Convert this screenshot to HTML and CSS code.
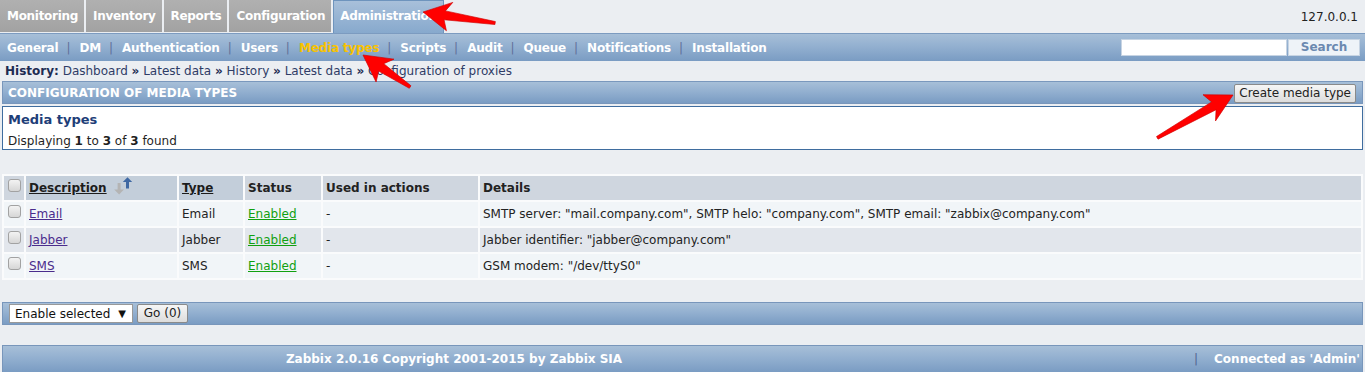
FILE: index.html
```html
<!DOCTYPE html>
<html lang="en">
<head>
  <meta charset="UTF-8" />
  <title>Configuration of media types</title>
  <link rel="stylesheet" href="styles.css">
</head>
<body>
  <div class="top">
    <ul class="tabs">
      <li>Monitoring</li>
      <li>Inventory</li>
      <li>Reports</li>
      <li>Configuration</li>
      <li class="active">Administration</li>
    </ul>
    <span class="host">127.0.0.1</span>
  </div>

  <div class="subbar">
    <nav class="submenu"><a>General</a><span class="sep">|</span><a>DM</a><span class="sep">|</span><a>Authentication</a><span class="sep">|</span><a>Users</a><span class="sep">|</span><a class="current">Media types</a><span class="sep">|</span><a>Scripts</a><span class="sep">|</span><a>Audit</a><span class="sep">|</span><a>Queue</a><span class="sep">|</span><a>Notifications</a><span class="sep">|</span><a>Installation</a></nav>
    <div class="search">
      <input type="text" class="search-input">
      <button class="search-btn">Search</button>
    </div>
  </div>

  <div class="page">
    <div class="history">
      <b>History:</b> <a>Dashboard</a> <b>&raquo;</b> <a>Latest data</a> <b>&raquo;</b> <a>History</a> <b>&raquo;</b> <a>Latest data</a> <b>&raquo;</b> <a>Configuration of proxies</a>
    </div>

    <div class="titlebar">
      <span class="title">CONFIGURATION OF MEDIA TYPES</span>
      <button class="btn">Create media type</button>
    </div>

    <div class="infobox">
      <h2>Media types</h2>
      <p>Displaying <b>1</b> to <b>3</b> of <b>3</b> found</p>
    </div>

    <table class="list">
      <thead>
        <tr>
          <th class="col-check"><input type="checkbox" class="cb"></th>
          <th class="col-desc sortable"><a class="sort-link">Description</a>
            <svg class="sort-icon" width="20" height="18" viewBox="0 0 20 18">
              <path d="M4.6 6h3v6.5H11L6.1 17.5 1.2 12.5h3.4z" fill="#b4b4b4"/>
              <path d="M13 11.5V5H9.8L14.5 0.2 19.2 5H16v6.5z" fill="#3e68a3"/>
            </svg>
          </th>
          <th class="col-type sortable"><a class="sort-link">Type</a></th>
          <th class="col-status">Status</th>
          <th class="col-used">Used in actions</th>
          <th>Details</th>
        </tr>
      </thead>
      <tbody>
        <tr class="odd">
          <td><input type="checkbox" class="cb"></td>
          <td><a class="link">Email</a></td>
          <td>Email</td>
          <td><a class="enabled">Enabled</a></td>
          <td>-</td>
          <td>SMTP server: "mail.company.com", SMTP helo: "company.com", SMTP email: "zabbix@company.com"</td>
        </tr>
        <tr class="even">
          <td><input type="checkbox" class="cb"></td>
          <td><a class="link">Jabber</a></td>
          <td>Jabber</td>
          <td><a class="enabled">Enabled</a></td>
          <td>-</td>
          <td>Jabber identifier: "jabber@company.com"</td>
        </tr>
        <tr class="odd">
          <td><input type="checkbox" class="cb"></td>
          <td><a class="link">SMS</a></td>
          <td>SMS</td>
          <td><a class="enabled">Enabled</a></td>
          <td>-</td>
          <td>GSM modem: "/dev/ttyS0"</td>
        </tr>
      </tbody>
    </table>

    <div class="actionbar">
      <div class="select"><span>Enable selected</span><span class="caret">&#9660;</span></div>
      <button class="btn">Go (0)</button>
    </div>

    <div class="footer">
      <span class="copyright">Zabbix 2.0.16 Copyright 2001-2015 by Zabbix SIA</span>
      <span class="fsep">|</span>
      <span class="user">Connected as 'Admin'</span>
    </div>
  </div>

  <svg class="arrows" width="1365" height="372" viewBox="0 0 1365 372">
    <path transform="translate(423 12) rotate(8.7)" d="M0 0L28-14L22-4.5L73-1.5L73 1.5L22 4.5L26 15Z"/>
    <path transform="translate(363 55) rotate(34.2)" d="M0 0L28-14L22-4.5L57-1.5L57 1.5L22 4.5L26 15Z"/>
    <path transform="translate(1233 95) rotate(150.5)" d="M0 0L28-14L22-4.5L87-1.5L87 1.5L22 4.5L26 15Z"/>
  </svg>
</body>
</html>
```

FILE: styles.css
```css
* {
  box-sizing: border-box;
}
body {
  margin: 0;
  font-family: "DejaVu Sans", Verdana, sans-serif;
  font-size: 12px;
  color: #1f1f1f;
  background: #ebeef2;
  position: relative;
  height: 372px;
  overflow: hidden;
}
button, input {
  font-family: inherit;
  font-size: 12px;
}

/* top tabs */
.top {
  display: flex;
  justify-content: space-between;
  align-items: center;
  height: 33px;
}
.tabs {
  display: flex;
  gap: 2px;
  margin: 0;
  padding: 0;
  list-style: none;
  align-self: flex-start;
}
.tabs li {
  height: 32px;
  line-height: 32px;
  padding: 0 6px 0 7px;
  font-weight: bold;
  letter-spacing: -0.3px;
  color: #fff;
  background: linear-gradient(#b0b0b0, #a2a2a2);
}
.tabs li.active {
  height: 33px;
  padding: 0 6px;
  border: 1px solid #6e94bd;
  border-bottom: 0;
  line-height: 31px;
  background: linear-gradient(#a8c0da, #87a9cd);
}
.host {
  padding-right: 7px;
  color: #222;
}

/* blue bars */
.subbar, .titlebar, .actionbar, .footer {
  background: linear-gradient(#a7bfd8, #93b0d0 45%, #7a9cc3);
}
.subbar {
  display: flex;
  justify-content: space-between;
  align-items: center;
  height: 28px;
  border-top: 1px solid #7c9bc0;
  padding: 0 5px 0 7px;
}
.submenu {
  white-space: nowrap;
}
.submenu a {
  font-weight: bold;
  letter-spacing: -0.2px;
  color: #fff;
}
.submenu a.current {
  color: #f8c200;
}
.submenu .sep {
  color: #5f6f99;
  padding: 0 9px 0 8px;
}
.search {
  display: flex;
}
.search-input {
  width: 166px;
  height: 17px;
  border: 1px solid #c7d4e3;
  background: #fff;
  padding: 0;
}
.search-btn {
  width: 72px;
  height: 17px;
  margin-left: 1px;
  border: 1px solid #c7d4e3;
  background: #eef3f8;
  color: #6b89b0;
  font-weight: bold;
  line-height: 13px;
  padding: 0;
}

.page {
  padding: 0 2px 0 2px;
}
.history {
  height: 21px;
  line-height: 21px;
  padding-left: 3px;
  color: #2f3c66;
  border-bottom: 1px solid #7a98bd;
}
.history b {
  color: #1e2c52;
}

.titlebar {
  display: flex;
  justify-content: space-between;
  align-items: center;
  height: 22px;
  padding: 0 6px 0 5px;
  border: 1px solid #7896bb;
  border-top: 0;
}
.title {
  font-weight: bold;
  color: #fff;
}
.btn {
  height: 19px;
  padding: 0 6px;
  border: 1px solid #8a8a8a;
  border-radius: 2px;
  background: linear-gradient(#f6f6f6, #dcdcdc);
  color: #222;
  line-height: 15px;
  white-space: nowrap;
}
.titlebar .btn {
  padding: 0 4px;
  margin-top: 1px;
}

.infobox {
  margin-top: 2px;
  height: 44px;
  background: #fff;
  border: 1px solid #3f6d9f;
  padding: 3px 5px;
}
.infobox h2 {
  margin: 0;
  font-size: 13px;
  line-height: 20px;
  color: #1e3e78;
}
.infobox p {
  margin: 3px 0 0;
  line-height: 16px;
}

/* list table */
.list {
  margin-top: 24px;
  width: 1361px;
  table-layout: fixed;
  border-collapse: separate;
  border-spacing: 2px;
  background: #fafbfc;
}
.list th, .list td {
  height: 24px;
  padding: 0 4px 0 3px;
  text-align: left;
  white-space: nowrap;
  overflow: hidden;
}
.list th {
  background: #cfd6df;
  font-weight: bold;
  color: #222;
}
.list th.sortable {
  background: #c3ceda;
}
.col-check { width: 20px; }
.col-desc { width: 151px; }
.col-type { width: 64px; }
.col-status { width: 76px; }
.col-used { width: 155px; }
.sort-link {
  text-decoration: underline;
  color: #1c1c1c;
}
.sort-icon {
  vertical-align: middle;
  margin: -4px 0 0 2px;
}
.list tr.odd td {
  background: #f1f5f8;
}
.list tr.even td {
  background: #e2e6ec;
}
.list td {
  color: #232323;
}
.link {
  color: #4a2c8c;
  text-decoration: underline;
}
.enabled {
  color: #10a010;
  text-decoration: underline;
}
.cb {
  appearance: none;
  width: 13px;
  height: 13px;
  margin: 0 0 0 1px;
  border: 1px solid #a2a2a2;
  border-radius: 3px;
  background: linear-gradient(#f3f3f3, #d6d6d6);
  vertical-align: 3px;
}

.actionbar {
  display: flex;
  align-items: center;
  gap: 4px;
  margin-top: 22px;
  height: 23px;
  padding: 0 6px;
  border: 1px solid #7896bb;
}
.select {
  display: flex;
  align-items: center;
  gap: 8px;
  height: 19px;
  padding: 0 6px 0 5px;
  background: #fff;
  border: 1px solid #999;
  color: #111;
  white-space: nowrap;
}
.caret {
  font-size: 10px;
}
.actionbar .btn {
  width: 51px;
  padding: 0;
}

.footer {
  display: flex;
  align-items: center;
  margin-top: 20px;
  height: 28px;
  border: 1px solid #7896bb;
  font-weight: bold;
  color: #fff;
}
.copyright {
  width: 902px;
  text-align: center;
}
.fsep {
  margin-left: 289px;
  color: #4f6490;
  font-weight: normal;
}
.user {
  margin-left: 16px;
}

.arrows {
  position: absolute;
  left: 0;
  top: 0;
  pointer-events: none;
}
.arrows path {
  fill: #ff0000;
  stroke: #d00000;
  stroke-width: 0.6;
}
```
